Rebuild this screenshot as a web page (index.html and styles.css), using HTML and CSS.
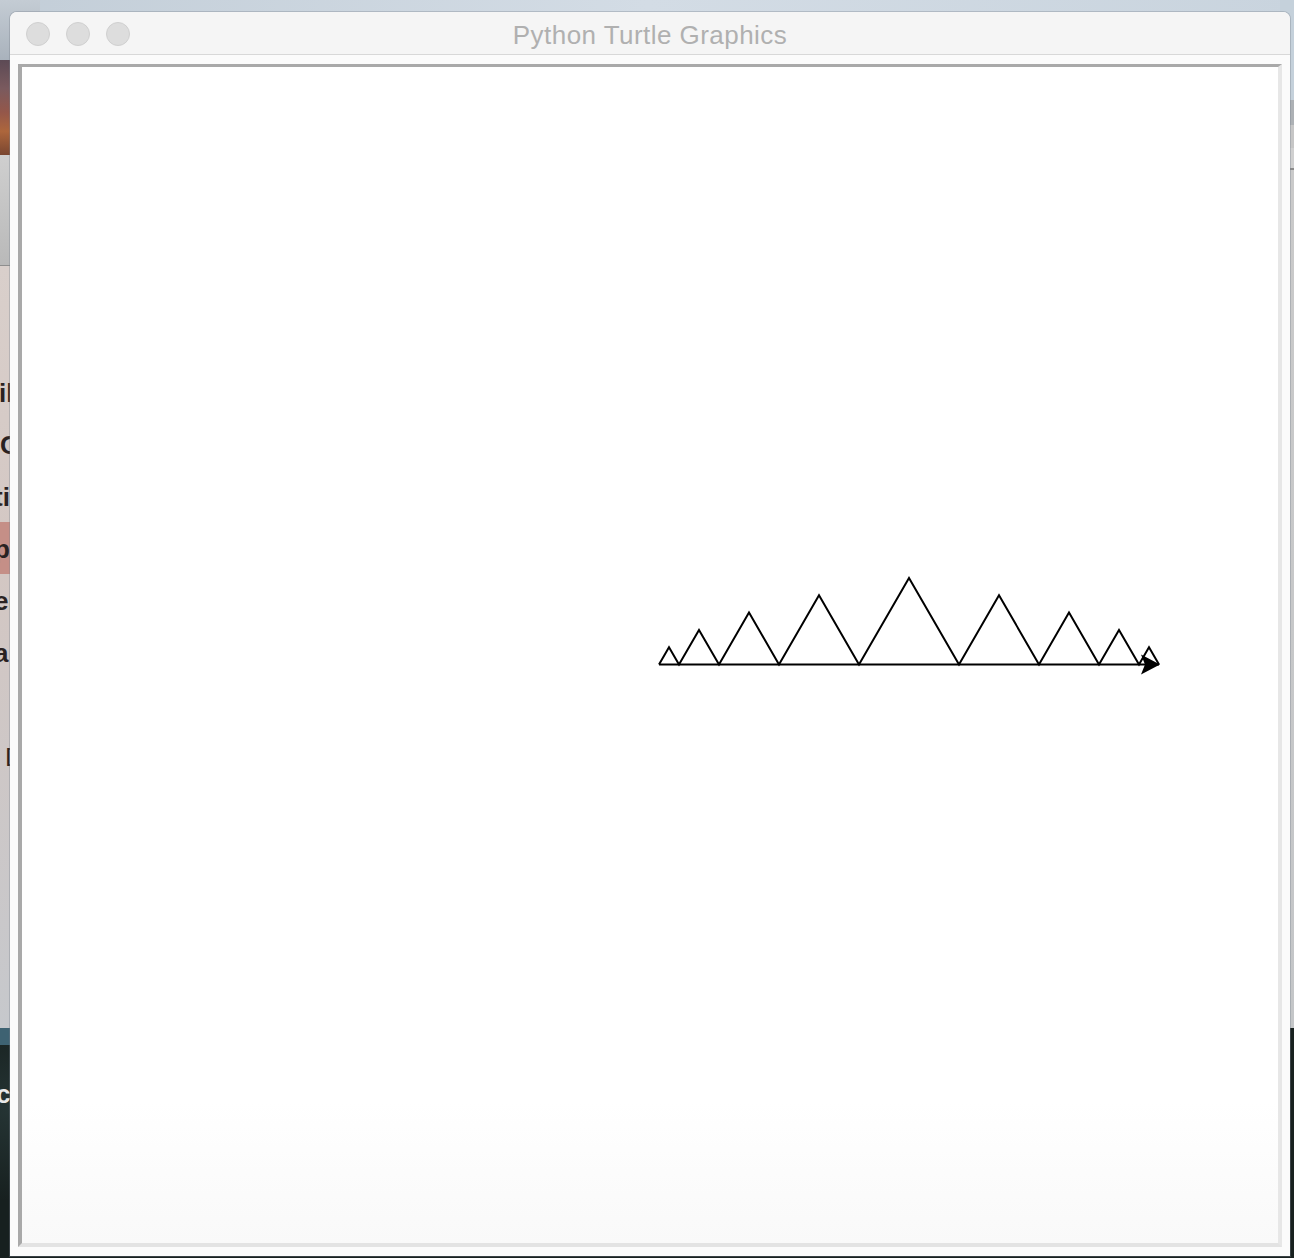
FILE: index.html
```html
<!DOCTYPE html>
<html lang="en">
<head>
<meta charset="utf-8">
<title>Python Turtle Graphics</title>
<link rel="stylesheet" href="styles.css">
</head>
<body>
<div class="desktop">
  <div class="left-app">
    <div class="la-sky"></div>
    <div class="la-photo"></div>
    <div class="la-toolbar"></div>
    <div class="la-sidebar">
      <div class="la-row shift1">il</div>
      <div class="la-row">Or</div>
      <div class="la-row shift2">ti</div>
      <div class="la-row selected">p</div>
      <div class="la-row shift2">er</div>
      <div class="la-row shift2">a</div>
      <div class="la-row"></div>
      <div class="la-row shift3">D</div>
    </div>
    <div class="la-dock"></div>
    <div class="la-forest"><span class="la-forest-text">c</span></div>
  </div>

  <div class="right-app">
    <div class="ra-sky"></div>
    <div class="ra-bar1"></div>
    <div class="ra-bar2"></div>
    <div class="ra-bar3"></div>
    <div class="ra-body"></div>
    <div class="ra-forest"></div>
  </div>

  <div class="turtle-window">
    <div class="titlebar">
      <div class="lights">
        <span class="light"></span>
        <span class="light"></span>
        <span class="light"></span>
      </div>
      <div class="title">Python Turtle Graphics</div>
    </div>
    <div class="content">
      <div class="canvas-frame">
        <svg class="canvas" viewBox="22 67 1256 1176" xmlns="http://www.w3.org/2000/svg">
          <polyline fill="none" stroke="#000" stroke-width="2" stroke-linejoin="miter"
            points="659,664.5 669,647.2 679,664.5 699,629.9 719,664.5 749,612.5 779,664.5 819,595.2 859,664.5 909,577.9 959,664.5 999,595.2 1039,664.5 1069,612.5 1099,664.5 1119,629.9 1139,664.5 1149,647.2 1159,664.5"/>
          <line x1="659" y1="664.5" x2="1159" y2="664.5" stroke="#000" stroke-width="2"/>
          <polygon points="1160,664.5 1141,654.5 1145,664.5 1141,674.5" fill="#000"/>
        </svg>
      </div>
    </div>
  </div>
</div>
</body>
</html>
```

FILE: styles.css
```css
* { box-sizing: border-box; }

html, body {
  margin: 0;
  padding: 0;
  background: #1a2424;
}

.desktop {
  position: relative;
  width: 1294px;
  height: 1258px;
  overflow: hidden;
  background:
    linear-gradient(to bottom, transparent 0, transparent 1028px, #18211f 1028px),
    linear-gradient(to right, #c3ced8 0%, #d3dce5 50%, #c9d4de 100%);
}

/* partially hidden app on the left */
.left-app {
  position: absolute;
  left: 0;
  top: 0;
  width: 40px;
  height: 1258px;
  display: flex;
  flex-direction: column;
}
.la-sky {
  height: 60px;
  background: linear-gradient(#c4ccd4, #a9b2bc);
}
.la-photo {
  height: 95px;
  background: linear-gradient(#5c4a55 0%, #7a5a5e 30%, #94574a 55%, #ad663c 75%, #7a4630 100%);
}
.la-toolbar {
  height: 111px;
  background: linear-gradient(#cfcfcf, #b9b9b9);
  border-bottom: 1px solid #8e8e8e;
}
.la-sidebar {
  flex: 1;
  padding-top: 100px;
  background: linear-gradient(#d9cfcb 0%, #d3c7c3 40%, #c6c8cc 100%);
  font-family: "Liberation Sans", Arial, sans-serif;
  font-size: 26px;
  font-weight: 600;
  color: #2a2222;
}
.la-row {
  height: 52px;
  line-height: 54px;
  white-space: nowrap;
  padding-left: 0;
}
.la-row.shift1 { margin-left: -1px; }
.la-row.shift2 { margin-left: -6px; }
.la-row.shift3 { padding-left: 5px; font-weight: 400; }
.la-row.selected {
  background: #c58f87;
  margin-left: -6px;
  padding-left: 0;
}
.la-dock {
  height: 17px;
  background: #3e6272;
}
.la-forest {
  height: 213px;
  padding-top: 36px;
  background: radial-gradient(circle at 20% 30%, #253434 0%, #17201f 60%), #17201f;
  font-family: "Liberation Sans", Arial, sans-serif;
  font-size: 26px;
  font-weight: 700;
  color: #e8e8e8;
  line-height: 26px;
}
.la-forest-text { margin-left: -4px; }

/* partially hidden app on the right */
.right-app {
  position: absolute;
  left: 1280px;
  top: 0;
  width: 14px;
  height: 1258px;
  display: flex;
  flex-direction: column;
}
.ra-sky { height: 100px; background: #c5d1db; }
.ra-bar1 { height: 25px; background: #adb1b5; }
.ra-bar2 { height: 23px; background: #c6c6c6; }
.ra-bar3 { height: 22px; background: #d0d0d0; border-bottom: 2px solid #8a8a8a; }
.ra-body { flex: 1; background: linear-gradient(#cacaca, #c4c6c8); }
.ra-forest { height: 230px; background: #18211f; }

/* turtle window */
.turtle-window {
  position: absolute;
  left: 10px;
  top: 12px;
  width: 1280px;
  height: 1244px;
  display: flex;
  flex-direction: column;
  background: #fbfbfb;
  border-radius: 7px 7px 0 0;
  box-shadow: 0 0 0 1px rgba(120, 130, 140, 0.35);
  overflow: hidden;
}

.titlebar {
  height: 43px;
  flex: none;
  display: grid;
  background: #f5f5f5;
  border-bottom: 1px solid #d8d8d8;
}
.lights {
  grid-area: 1 / 1;
  display: flex;
  gap: 16px;
  padding: 10px 0 0 16px;
  align-items: flex-start;
}
.light {
  width: 24px;
  height: 24px;
  border-radius: 50%;
  background: #dddddd;
  border: 1px solid #d0d0d0;
}
.title {
  grid-area: 1 / 1;
  justify-self: center;
  padding-top: 2px;
  font-family: "Liberation Sans", Arial, sans-serif;
  font-size: 26px;
  letter-spacing: 0.45px;
  line-height: 42px;
  color: #b0b0b0;
}

.content {
  flex: 1;
  display: flex;
  padding: 9px 8px 9px 8px;
  background: #fbfbfb;
}

.canvas-frame {
  flex: 1;
  display: flex;
  border-top: 3px solid #a9a9a9;
  border-left: 4px solid #a9a9a9;
  border-right: 4px solid #e7e7e7;
  border-bottom: 4px solid #e3e3e3;
  background: linear-gradient(to bottom, #ffffff 0%, #ffffff 88%, #f9f9f9 100%);
}

.canvas {
  display: block;
  width: 1256px;
  height: 1176px;
}
```
